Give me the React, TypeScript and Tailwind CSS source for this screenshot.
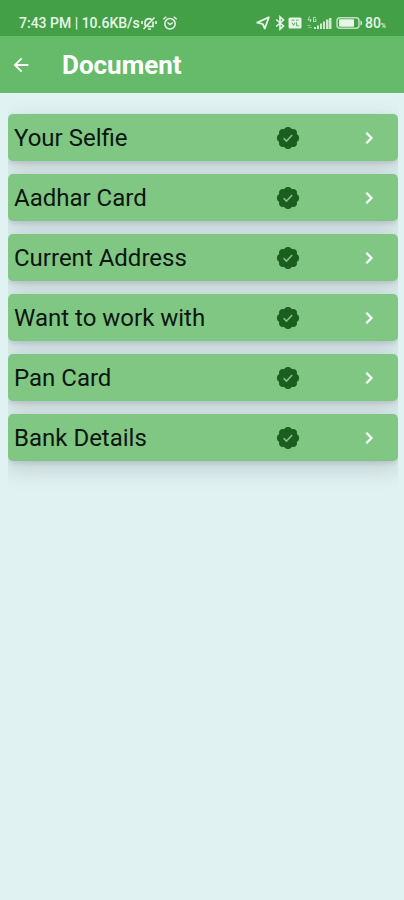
import { MdArrowBack } from "react-icons/md";

const DOCUMENTS = [
  "Your Selfie",
  "Aadhar Card",
  "Current Address",
  "Want to work with",
  "Pan Card",
  "Bank Details",
];

function VerifiedBadge() {
  return (
    <svg viewBox="0 0 24 24" className="h-6 w-6 shrink-0" role="img" aria-label="Verified">
      <g fill="#1b5e20">
        <circle cx="12" cy="12" r="8" />
        <circle cx="12" cy="4.900" r="4" />
        <circle cx="17" cy="7" r="4" />
        <circle cx="19.100" cy="12" r="4" />
        <circle cx="17" cy="17" r="4" />
        <circle cx="12" cy="19.100" r="4" />
        <circle cx="7" cy="17" r="4" />
        <circle cx="4.900" cy="12" r="4" />
        <circle cx="7" cy="7" r="4" />
      </g>
      <path d="M7.600 12.200l2.900 2.900 5.700-6" fill="none" stroke="#81c784" strokeWidth="1.5" />
    </svg>
  );
}

function ChevronRight() {
  return (
    <svg viewBox="0 0 24 24" className="ml-[57px] h-6 w-6 shrink-0" fill="none" stroke="#fff" strokeWidth="2.2" aria-hidden>
      <path d="M9.300 6.800L14.500 12l-5.200 5.200" />
    </svg>
  );
}

function MutedBell() {
  return (
    <svg viewBox="0 0 18 16" className="h-4 w-[18px]" fill="none" stroke="currentColor" strokeWidth="1.6" aria-hidden>
      <path d="M5 11V7.500a4 4 0 0 1 7-2.500M13 6.500V11.500H7.500M8 14h3M3.500 14L14.500 2.500M2 6v3M16 6v3" />
    </svg>
  );
}

function AlarmClock() {
  return (
    <svg viewBox="0 0 16 16" className="h-4 w-4" fill="none" stroke="currentColor" strokeWidth="1.5" aria-hidden>
      <circle cx="8" cy="8.800" r="5.200" />
      <path d="M1.300 4.300L4.300 1.700M14.700 4.300L11.700 1.700M5.500 7.500L8 9.500l2.800-2" />
    </svg>
  );
}

function LocationArrow() {
  return (
    <svg viewBox="0 0 14 14" className="h-3.5 w-3.5" fill="none" stroke="currentColor" strokeWidth="1.8" strokeLinejoin="round" aria-hidden>
      <path d="M12.800 1.200L8.800 12.500 6.700 8 1.200 6.600z" />
    </svg>
  );
}

function Bluetooth() {
  return (
    <svg viewBox="0 0 16 16" className="ml-0.5 h-4 w-4" fill="none" stroke="currentColor" strokeWidth="1.6" aria-hidden>
      <path d="M4.200 4.500L11.500 11 8 14.200V1.800L11.500 5 4.200 11.500" />
    </svg>
  );
}

function VolteBadge() {
  return (
    <svg viewBox="0 0 14 12" className="h-3 w-3.5" aria-hidden>
      <rect x="0.500" y="0.500" width="13" height="11" rx="1.500" fill="currentColor" />
      <path d="M3.500 3.200h3M8 3.200h2.500M4 5.500l1.500 3 1.500-3M8.500 5.200v3.500h2.500" fill="none" stroke="#43a047" opacity="0.8" />
    </svg>
  );
}

function Signal() {
  return (
    <svg viewBox="0 0 26 14" className="h-3.5 w-[26px]" fill="currentColor" aria-hidden>
      <path d="M3.500 0.500L2 4h3.500M4.500 3v3M10 1.500H7.500v4H10V3.500H9" fill="none" stroke="currentColor" opacity="0.7" />
      <path d="M1 9h4v1H1zM2 11h4v1H2z" opacity="0.4" />
      <path d="M8 11h2v2H8zM11 9.500h2V13h-2zM14 7.500h2V13h-2zM17 5.500h2V13h-2zM20 3.500h2.500V13H20zM23 2h2.500v11H23z" opacity="0.85" />
    </svg>
  );
}

function Battery() {
  return (
    <svg viewBox="0 0 27 12" className="h-3 w-[27px]" aria-hidden>
      <rect x="1" y="0.800" width="22" height="10.400" rx="3" fill="none" stroke="currentColor" strokeWidth="1.500" opacity="0.75" />
      <rect x="3" y="2.200" width="15" height="7.600" rx="1" fill="currentColor" />
      <path d="M24.500 3.500c2 .5 2 4.500 0 5z" fill="currentColor" />
    </svg>
  );
}

function StatusBar() {
  return (
    <div className="flex h-9 items-end justify-between bg-[#43a047] pr-[18px] pb-1 pl-[19px] text-sm leading-[18px] font-medium text-[#e8f5e9]">
      <div className="flex items-center">
        <span>7:43 PM | 10.6KB/s</span>
        <span className="flex items-center gap-1">
          <MutedBell />
          <AlarmClock />
        </span>
      </div>
      <div className="flex items-center">
        <LocationArrow />
        <Bluetooth />
        <VolteBadge />
        <span className="ml-1 flex items-center gap-1">
          <Signal />
          <Battery />
        </span>
        <span className="ml-0.5 flex items-baseline">
          <span>80</span>
          <span className="text-[7px] leading-none">%</span>
        </span>
      </div>
    </div>
  );
}

export default function App() {
  return (
    <div className="min-h-screen bg-[#e0f2f1] font-[Roboto,sans-serif]">
      <StatusBar />
      <header className="flex h-[57px] items-center bg-[#66bb6a] px-2.5 text-white">
        <button type="button" aria-label="Back">
          <MdArrowBack className="h-[22px] w-[22px]" />
        </button>
        <h1 className="ml-[30px] text-[26px] leading-8 font-bold">Document</h1>
      </header>

      <main className="pr-1.5 pl-2">
        {/* overflow-hidden trims the card shadows at the list's side edges */}
        <ul className="space-y-[13px] overflow-hidden pt-[21px] pb-10">
          {DOCUMENTS.map((name) => (
            <li key={name}>
              <button
                type="button"
                className="flex h-[47px] w-full items-center rounded-[5px] bg-[#81c784] pr-[17px] pl-1.5 text-left shadow-[0_2px_4px_rgba(70,60,80,0.14),0_8px_22px_rgba(70,60,80,0.2)]"
              >
                <span className="flex-1 text-2xl text-[#0c160d]">{name}</span>
                <VerifiedBadge />
                <ChevronRight />
              </button>
            </li>
          ))}
        </ul>
      </main>
    </div>
  );
}
